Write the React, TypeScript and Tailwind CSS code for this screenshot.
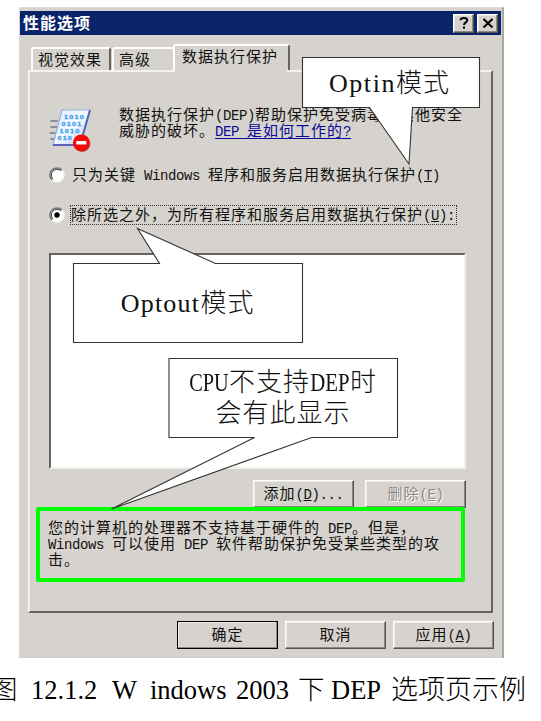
import React from "react";

type Kids = { children?: React.ReactNode };

/* Half-width Latin run set beside 16px full-width characters. */
const L = ({ children }: Kids) => (
  <span className="whitespace-pre font-['Liberation_Mono',monospace] text-[14px] leading-[0] tracking-[-0.4px]">{children}</span>
);

/* Condensed serif Latin word inside the large callout labels. */
const B = ({ children, className }: Kids & { className: string }) => (
  <span className={`inline-flex justify-center font-['Liberation_Serif',serif] text-[26px] leading-[0] font-normal ${className}`}>
    {children}
  </span>
);

const raised =
  "border border-t-white border-l-white border-r-[#55534f] border-b-[#55534f] shadow-[inset_-1px_-1px_0_#8b8984,inset_1px_1px_0_#eceae6]";

function Button({ children, className = "" }: Kids & { className?: string }) {
  return (
    <button className={`flex h-[28px] w-[101px] items-center justify-center bg-[#d6d3ce] pb-[2px] ${raised} ${className}`}>
      {children}
    </button>
  );
}

function Radio({ checked = false }: { checked?: boolean }) {
  return (
    <svg width="16" height="16" viewBox="0 0 16 16" className="shrink-0">
      <circle cx="8" cy="8" r="7" fill="#fff" />
      <path d="M3 13A7 7 0 0 1 13 3" fill="none" stroke="#77757a" strokeWidth="1.6" />
      <path d="M4 12A5.6 5.6 0 0 1 12 4" fill="none" stroke="#454545" strokeWidth="1" />
      <path d="M13 3A7 7 0 0 1 3 13" fill="none" stroke="#f4f3f0" strokeWidth="1.5" />
      {checked && <circle cx="8" cy="8" r="2.7" fill="#000" />}
    </svg>
  );
}

function DepIcon() {
  return (
    <svg width="44" height="46" viewBox="0 0 44 46" className="shrink-0">
      <defs>
        <linearGradient id="page" x1="0" y1="0" x2="1" y2="1">
          <stop offset="0" stopColor="#dcecff" />
          <stop offset="0.5" stopColor="#f7fbff" />
          <stop offset="1" stopColor="#a9c4f5" />
        </linearGradient>
      </defs>
      <g stroke="#8d8f96" strokeWidth="1.8" strokeLinecap="round">
        <path d="M2 15h6M2 21h6M1.5 27h6M2 33h4" />
      </g>
      <path d="M13 4H41L31 39H4Z" fill="url(#page)" stroke="#8fb2ec" strokeWidth="1.2" />
      <path d="M41 4L31 39H4" fill="none" stroke="#5864b8" strokeWidth="2" />
      <g fill="#3da0ee" stroke="#3da0ee" strokeWidth="0.3" fontFamily="Liberation Sans, sans-serif" fontSize="6" fontWeight="bold">
        <text x="15" y="13" textLength="21" lengthAdjust="spacingAndGlyphs">1010</text>
        <text x="12.5" y="20" textLength="21" lengthAdjust="spacingAndGlyphs">0101</text>
        <text x="10.5" y="27" textLength="21" lengthAdjust="spacingAndGlyphs">1010</text>
        <text x="8.5" y="34" textLength="15.5" lengthAdjust="spacingAndGlyphs">010</text>
      </g>
      <circle cx="33" cy="37.6" r="8.4" fill="#a34b4b" />
      <circle cx="32.3" cy="36.8" r="8.4" fill="#f50808" />
      <rect x="27.3" y="35" width="10" height="3.6" rx="0.6" fill="#fff" />
    </svg>
  );
}

export default function App() {
  return (
    <div className="relative h-[721px] w-[541px] overflow-hidden bg-white pt-[7px] pl-[19px] font-['Noto_Sans_CJK_SC',sans-serif] text-[15px] leading-4 tracking-[1px] whitespace-nowrap text-[#111]">
      <div className="flex h-[651px] w-[485px] flex-col border-t border-r-2 border-t-[#dedbd7] border-r-[#aaa8a4] bg-[#d6d3ce] pt-[3px] pl-px">
        <header className="flex h-[24px] w-[481px] items-center justify-between bg-[#0a246a] pr-[3px] pl-[3px] text-white">
          <h1 className="pb-[2px] text-[16px] font-bold">性能选项</h1>
          <div className="flex gap-[3px]">
            <div className={`flex h-[19px] w-[21px] items-center justify-center bg-[#d6d3ce] ${raised}`}>
              <svg width="12" height="14" viewBox="0 0 12 14" fill="none" stroke="#000" strokeWidth="2">
                <path d="M2.5 4.2C2.5 1.2 9.3 1 9.3 4.3C9.3 6.4 6 6.3 6 9" />
                <path d="M6 10.5v2.2" />
              </svg>
            </div>
            <div className={`flex h-[19px] w-[21px] items-center justify-center bg-[#d6d3ce] ${raised}`}>
              <svg width="12" height="12" viewBox="0 0 12 12" stroke="#000" strokeWidth="2">
                <path d="M1.5 2L10.5 10.5M10.5 2L1.5 10.5" />
              </svg>
            </div>
          </div>
        </header>

        <nav className="mt-[9px] flex h-[26px] items-end pl-[11px]">
          <div className="flex h-[23px] w-[80px] items-center rounded-t-[3px] border-t-2 border-r-2 border-l-2 border-t-white border-r-[#66645f] border-l-white pb-px pl-[5px]">视觉效果</div>
          <div className="ml-px flex h-[23px] w-[61px] items-center rounded-tl-[3px] border-t-2 border-l-2 border-white pb-px pl-[5px]">高级</div>
          <div className="flex h-[26px] w-[117px] items-start rounded-t-[3px] border-t-2 border-r-2 border-l-2 border-t-white border-r-[#66645f] border-l-white pt-[2px] pl-[7px]">数据执行保护</div>
        </nav>

        <main className="relative ml-2 flex h-[543px] w-[465px] flex-col border-2 border-t-[#f4f3f0] border-r-[#66645f] border-b-[#66645f] border-l-[#f4f3f0]">
          <span className="absolute -top-[2px] left-[145px] h-[2px] w-[112px] bg-[#d6d3ce]" />
          <section className="flex h-[84px] pt-[34px] pl-[19px]">
            <DepIcon />
            <p className="ml-[26px]">
              数据执行保护<L>(DEP)</L>帮助保护免受病毒或其他安全
              <br />
              威胁的破坏。<a className="text-[#0a0a9a] underline underline-offset-[2px]"><L>DEP </L>是如何工作的<L>?</L></a>
            </p>
          </section>

          <label className="mt-[9px] flex h-[20px] items-center pl-[19px]">
            <Radio />
            <span className="ml-[7px] pb-[2px]">只为关键<L> Windows </L>程序和服务启用数据执行保护<L>(<u>T</u>)</L></span>
          </label>
          <label className="mt-[20px] flex h-[20px] items-center pl-[19px]">
            <Radio checked />
            <span className="ml-[5px] flex h-[20px] w-[387px] items-center border border-dotted border-[#333] pb-[2px]">
              <span>除所选之外，为所有程序和服务启用数据执行保护<L>(<u>U</u>):</L></span>
            </span>
          </label>

          <div className="mt-[28px] ml-[19px] h-[216px] w-[417px] border-2 border-t-[#66645f] border-r-[#f1f0ed] border-b-[#f1f0ed] border-l-[#66645f] bg-white" />

          <div className="mt-[11px] ml-[223px] flex gap-[11px]">
            <Button><span>添加<L>(<u>D</u>)...</L></span></Button>
            <Button className="text-[#8b8984] [text-shadow:1px_1px_0_#fff]"><span>删除<L>(<u>E</u>)</L></span></Button>
          </div>

          <p className="-mt-px ml-[6px] h-[75px] w-[429px] rounded-[2px] border-4 border-[#00ff00] pt-[8px] pl-[8px]">
            您的计算机的处理器不支持基于硬件的<L> DEP</L>。但是，
            <br />
            <L>Windows </L>可以使用<L> DEP </L>软件帮助保护免受某些类型的攻
            <br />
            击。
          </p>
        </main>

        <footer className="mt-[8px] flex gap-[7px] pl-[157px]">
          <Button className="outline outline-1 -outline-offset-1 outline-black">确定</Button>
          <Button>取消</Button>
          <Button><span>应用<L>(<u>A</u>)</L></span></Button>
        </footer>
      </div>

      <p className="mt-[15px] -ml-[28px] flex h-[34px] items-center font-['Liberation_Serif','Noto_Sans_CJK_SC',serif] text-[26.5px] leading-8 tracking-normal text-black">
        <span className="w-[40px] font-light">图</span>
        <span className="w-[81px]">12.1.2</span>
        <span className="w-[38px]">W</span>
        <span className="w-[86px]">indows</span>
        <span className="w-[62px]">2003</span>
        <span className="w-[33px] font-light">下</span>
        <span className="w-[60px]">DEP</span>
        <span className="text-[27px] font-light">选项页示例</span>
      </p>

      <svg className="absolute top-0 left-0" width="541" height="721" viewBox="0 0 541 721" fill="#fff" stroke="#333" strokeWidth="1.1">
        <path d="M302.5 57.5H479.5V107.5H412.5L409 164L369.5 107.5H302.5Z" />
        <path d="M73.5 263.5H159.5L137.5 228.5L215.5 263.5H302.5V342.5H73.5Z" />
        <path d="M169 358.5H397.5V437.5H311.5L111.5 509L254.5 437.5H169Z" />
      </svg>
      <div className="absolute top-[57px] left-[302px] flex h-[46px] w-[175px] items-center justify-center text-[26px] leading-[31px] font-light">
        <span><B className="w-[67px] tracking-[1.6px]">Optin</B>模式</span>
      </div>
      <div className="absolute top-[263px] left-[73px] flex h-[74px] w-[229px] items-center justify-center text-[26px] leading-[31px] font-light">
        <span><B className="w-[80px] tracking-[1.2px]">Optout</B>模式</span>
      </div>
      <div className="absolute top-[358px] left-[169px] flex h-[74px] w-[228px] items-center justify-center text-center text-[26px] leading-[31px] font-light">
        <span><B className="w-[40px] scale-x-[0.78] tracking-normal">CPU</B>不支持<B className="w-[40px] scale-x-[0.8] tracking-normal">DEP</B>时<br />会有此显示</span>
      </div>
    </div>
  );
}
